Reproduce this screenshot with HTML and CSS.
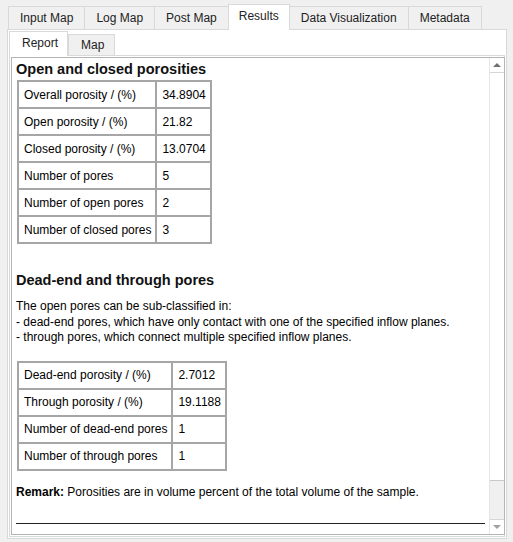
FILE: index.html
```html
<!DOCTYPE html>
<html lang="en">
<head>
    <meta charset="UTF-8">
    <title>Results - Report</title>
    <link rel="stylesheet" href="styles.css">
</head>
<body>

<nav class="tabs">
    <div class="tab">Input Map</div>
    <div class="tab">Log Map</div>
    <div class="tab">Post Map</div>
    <div class="tab valgt">Results</div>
    <div class="tab">Data Visualization</div>
    <div class="tab">Metadata</div>
</nav>

<section class="pane">

    <nav class="subtabs">
        <div class="subtab valgt">Report</div>
        <div class="subtab">Map</div>
    </nav>

    <div class="subpane">
        <div class="browser">

            <article class="report">
                <h3>Open and closed porosities</h3>
                <table class="t1">
                    <tr><td>Overall porosity / (%)</td><td>34.8904</td></tr>
                    <tr><td>Open porosity / (%)</td><td>21.82</td></tr>
                    <tr><td>Closed porosity / (%)</td><td>13.0704</td></tr>
                    <tr><td>Number of pores</td><td>5</td></tr>
                    <tr><td>Number of open pores</td><td>2</td></tr>
                    <tr><td>Number of closed pores</td><td>3</td></tr>
                </table>

                <h3 class="second">Dead-end and through pores</h3>
                <p class="intro">The open pores can be sub-classified in:<br>
                - dead-end pores, which have only contact with one of the specified inflow planes.<br>
                - through pores, which connect multiple specified inflow planes.</p>

                <table class="t2">
                    <tr><td>Dead-end porosity / (%)</td><td>2.7012</td></tr>
                    <tr><td>Through porosity / (%)</td><td>19.1188</td></tr>
                    <tr><td>Number of dead-end pores</td><td>1</td></tr>
                    <tr><td>Number of through pores</td><td>1</td></tr>
                </table>

                <p class="remark"><b>Remark:</b> Porosities are in volume percent of the total volume of the sample.</p>
                <hr>
            </article>

            <div class="scrollbar">
                <div class="arrow"><span class="up"></span></div>
                <div class="thumb"></div>
                <div class="track"></div>
                <div class="arrow last"><span class="down"></span></div>
            </div>

        </div>
    </div>

</section>

</body>
</html>
```

FILE: styles.css
```css
* {
    box-sizing: border-box;
}

body {
    margin: 0;
    width: 513px;
    height: 542px;
    background-color: #f0f0f0;
    font-family: "Liberation Sans", Arial, sans-serif;
    font-size: 12px;
    color: #000;
    overflow: hidden;
}

/* outer tabs */
.tabs {
    display: flex;
    align-items: flex-end;
    height: 29px;
    padding-left: 8px;
}

.tab {
    height: 23px;
    line-height: 22px;
    padding: 0 11px;
    border: 1px solid #d9d9d9;
    border-bottom: 0;
    margin-left: -1px;
    background-color: #f0f0f0;
    color: #222;
}

.tab:first-child {
    margin-left: 0;
}

.tab.valgt {
    height: 26px;
    line-height: 23px;
    padding: 0 10px;
    background-color: #fff;
    position: relative;
    z-index: 1;
    margin-bottom: -1px;
}

.pane {
    display: flex;
    flex-direction: column;
    margin-left: 7px;
    width: 500px;
    height: 510px;
    border: 1px solid #d9d9d9;
    background-color: #fff;
    padding: 1px 1px 1px 1px;
}

/* inner tabs */
.subtabs {
    display: flex;
    align-items: flex-end;
    height: 24px;
}

.subtab {
    height: 21px;
    line-height: 20px;
    padding: 0 10px 0 12px;
    border: 1px solid #d9d9d9;
    border-bottom: 0;
    background-color: #f0f0f0;
    color: #222;
}

.subtab.valgt {
    width: 59px;
    height: 25px;
    line-height: 23px;
    background-color: #fff;
    position: relative;
    z-index: 1;
    margin-bottom: -1px;
}

.subpane {
    flex: 1;
    display: flex;
    border: 1px solid #d9d9d9;
    padding: 1px;
}

.browser {
    flex: 1;
    display: flex;
    border: 1px solid #b4b4b4;
}

.report {
    flex: 1;
    padding: 2px 4px 0 4px;
    overflow: hidden;
}

h3 {
    font-size: 14.5px;
    font-weight: bold;
    line-height: 18px;
    margin: 0 0 2px 0;
    color: #111;
}

h3.second {
    margin-top: 27px;
}

table {
    border-collapse: collapse;
    border: 2px solid #9a9a9a;
    margin-left: 1px;
}

td {
    border: 2px solid #a6a6a6;
    height: 27px;
    padding: 0 4px 0 5px;
    white-space: nowrap;
}

.intro {
    margin: 10px 0 0 0;
    line-height: 15.5px;
}

.t2 {
    margin-top: 15px;
}

.remark {
    margin: 13px 0 0 0;
    line-height: 16px;
}

hr {
    margin: 23px 0 0 0;
    border: 0;
    border-top: 1px solid #222;
    width: 469px;
}

/* scrollbar */
.scrollbar {
    width: 15px;
    display: flex;
    flex-direction: column;
    background-color: #f0f0f0;
    border-left: 1px solid #e6e6e6;
}

.arrow {
    height: 15px;
    display: flex;
    justify-content: center;
    align-items: center;
    background-color: #fff;
    border-bottom: 1px solid #d6d6d6;
}

.arrow.last {
    border-bottom: 0;
    border-top: 1px solid #d6d6d6;
    background-color: #fff;
}

.up, .down {
    width: 0;
    height: 0;
    border-left: 4px solid transparent;
    border-right: 4px solid transparent;
}

.up {
    border-bottom: 4px solid #707070;
}

.down {
    border-top: 4px solid #a0a0a0;
}

.thumb {
    height: 408px;
    background-color: #fff;
    border-bottom: 1px solid #c8c8c8;
}

.track {
    flex: 1;
}
```
